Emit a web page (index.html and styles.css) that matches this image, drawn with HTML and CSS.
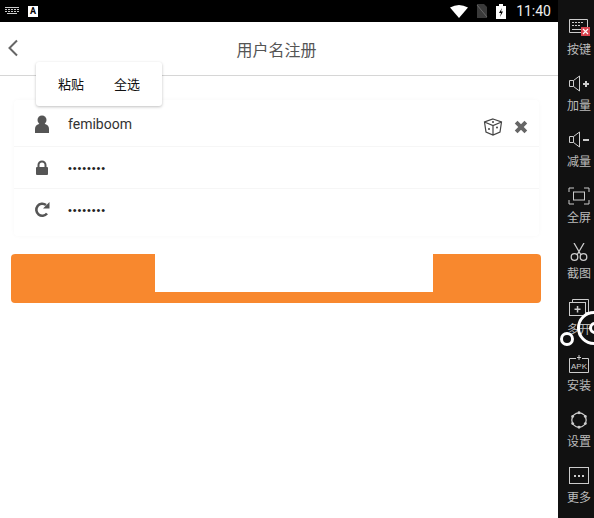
FILE: index.html
```html
<!DOCTYPE html>
<html lang="zh-CN">
<head>
  <meta charset="UTF-8" />
  <title>用户名注册</title>
  <link rel="stylesheet" href="styles.css">
</head>
<body>

  <div class="screen">
    <div class="statusbar">
      <div class="status-left">
        <svg class="kbd-icon" width="16" height="8" viewBox="0 0 16 8"><path d="M1 0h14v1H1zM1 2h2v1H1zM4 2h2v1H4zM7 2h2v1H7zM10 2h2v1h-2zM13 2h2v1h-2zM1 4h2v1H1zM4 4h2v1H4zM7 4h2v1H7zM10 4h2v1h-2zM13 4h2v1h-2zM3 6h10v1H3z" fill="#ccc"/></svg>
        <div class="a-icon">A</div>
      </div>
      <div class="status-right">
        <svg width="18" height="13" viewBox="0 0 18 13"><path d="M0 2.500Q9-2.500 18 2.500L9 13z" fill="#fff"/></svg>
        <svg width="14" height="14" viewBox="0 0 14 14"><path d="M2 0h7l3 3v11H2z" fill="#3a3a3a"/><path d="M2 1l10 12" stroke="#666" stroke-width="1"/></svg>
        <svg width="10" height="15" viewBox="0 0 10 15"><path d="M3 0h4v2h3v13H0V2h3z" fill="#fff"/><path d="M6 4L3 9h2l-1 4 3-5.500H5z" fill="#000"/></svg>
        <span class="clock">11:40</span>
      </div>
    </div>

    <div class="header">
      <svg class="back" width="12" height="18" viewBox="0 0 12 18"><path d="M10 1.500L2.500 9l7.500 7.500" fill="none" stroke="#666" stroke-width="2"/></svg>
      <h1>用户名注册</h1>
    </div>

    <div class="content">
      <div class="form">
        <div class="row row-first">
          <svg class="row-icon" width="16" height="18" viewBox="0 0 16 18"><circle cx="8" cy="5" r="4.500" fill="#555"/><path d="M1 18v-4q0-4 4-5h6q4 1 4 5v4z" fill="#555"/></svg>
          <span class="value">femiboom</span>
          <div class="row-actions">
            <svg width="20" height="18" viewBox="0 0 20 18"><path d="M10 1l8.500 3-1.500 10-7 3-7-3L1.500 4zM1.500 4L10 7.500 18.500 4M10 7.500V17" fill="none" stroke="#444" stroke-width="1.200"/><circle cx="6" cy="11" r="1" fill="#444"/><circle cx="14" cy="9.500" r="1" fill="#444"/><circle cx="10" cy="4" r="1" fill="#444"/></svg>
            <svg width="14" height="14" viewBox="0 0 13 13"><path d="M2 2l9 9M11 2l-9 9" stroke="#666" stroke-width="3.600"/></svg>
          </div>
        </div>
        <div class="row">
          <svg class="row-icon" width="14" height="16" viewBox="0 0 14 16"><path d="M3.500 7V5a3.500 3.500 0 017 0v2" fill="none" stroke="#555" stroke-width="2"/><rect x="1" y="7" width="12" height="8" rx="1" fill="#555"/></svg>
          <span class="dots">••••••••</span>
        </div>
        <div class="row row-last">
          <svg class="row-icon" width="17" height="17" viewBox="0 0 17 17"><path d="M13.500 12.500A6 6 0 1112.500 4" fill="none" stroke="#555" stroke-width="2.600"/><path d="M16 1v6.500H9.500z" fill="#555"/></svg>
          <span class="dots">••••••••</span>
        </div>
      </div>
      <div class="submit"><div class="submit-cover"></div></div>
    </div>

    <div class="popup">
      <span>粘贴</span>
      <span>全选</span>
    </div>
  </div>

  <div class="sidebar">
    <div class="tool">
      <svg width="22" height="18" viewBox="0 0 22 18"><path d="M1.500.5h18v13h-18z" fill="none" stroke="#ccc"/><path d="M4 3h2v1H4zM7 3h2v1H7zM10 3h2v1h-2zM13 3h2v1h-2zM4 6h2v1H4zM7 6h2v1H7zM10 6h2v1h-2zM4 10h9v1H4z" fill="#ccc"/><rect x="13" y="8" width="9" height="9" fill="#d9434e"/><path d="M15 10l5 5M20 10l-5 5" stroke="#fff" stroke-width="1.200"/></svg>
      <span>按键</span>
    </div>
    <div class="tool">
      <svg width="22" height="18" viewBox="0 0 22 18"><path d="M1.500 5.500h4l6-4.500v15l-6-4.500h-4zM5.500 5.500v6" fill="none" stroke="#ccc"/><path d="M15 8h6v2h-6zM17 6h2v6h-2z" fill="#ccc"/></svg>
      <span>加量</span>
    </div>
    <div class="tool">
      <svg width="22" height="18" viewBox="0 0 22 18"><path d="M1.500 5.500h4l6-4.500v15l-6-4.500h-4zM5.500 5.500v6" fill="none" stroke="#ccc"/><path d="M15 8h6v2h-6z" fill="#ccc"/></svg>
      <span>减量</span>
    </div>
    <div class="tool">
      <svg width="22" height="18" viewBox="0 0 22 18"><path d="M1 5V1h5M16 1h5v4M21 13v4h-5M6 17H1v-4" fill="none" stroke="#ccc"/><rect x="5.500" y="5" width="11" height="8" fill="none" stroke="#ccc"/></svg>
      <span>全屏</span>
    </div>
    <div class="tool">
      <svg width="22" height="18" viewBox="0 0 22 18"><path d="M6 0l7 12M16 0L9 12" stroke="#ccc" stroke-width="1.300"/><circle cx="6.500" cy="14" r="3.300" fill="none" stroke="#ccc" stroke-width="1.300"/><circle cx="15.500" cy="14" r="3.300" fill="none" stroke="#ccc" stroke-width="1.300"/></svg>
      <span>截图</span>
    </div>
    <div class="tool">
      <svg width="22" height="18" viewBox="0 0 22 18"><path d="M4.500 3.500V.5h16v13h-3" fill="none" stroke="#ccc"/><rect x="1.500" y="3.500" width="16" height="13" fill="none" stroke="#ccc"/><path d="M6.500 9.500h6v1.500h-6zM8.800 7h1.500v6.500H8.800z" fill="#ccc"/></svg>
      <span>多开</span>
    </div>
    <div class="tool">
      <svg width="22" height="18" viewBox="0 0 22 18"><path d="M8 3.500H1.500v14h19v-14H14" fill="none" stroke="#ccc"/><path d="M9 2h4v1H9zM10.500 0h1v5h-1z" fill="#ccc"/><text x="11" y="14" class="apk">APK</text></svg>
      <span>安装</span>
    </div>
    <div class="tool">
      <svg width="22" height="18" viewBox="0 0 22 20"><circle cx="11" cy="10" r="8" fill="none" stroke="#ccc" stroke-width="1.400"/><circle cx="11" cy="2" r="1.600" fill="#ccc"/><circle cx="11" cy="18" r="1.600" fill="#ccc"/><circle cx="4" cy="6" r="1.600" fill="#ccc"/><circle cx="18" cy="6" r="1.600" fill="#ccc"/><circle cx="4" cy="14" r="1.600" fill="#ccc"/><circle cx="18" cy="14" r="1.600" fill="#ccc"/></svg>
      <span>设置</span>
    </div>
    <div class="tool">
      <svg width="22" height="18" viewBox="0 0 22 18"><rect x="1.500" y=".5" width="19" height="16" fill="none" stroke="#ccc"/><path d="M6 8h2v2H6zM10 8h2v2h-2zM14 8h2v2h-2z" fill="#ccc"/></svg>
      <span>更多</span>
    </div>
    <div class="ring ring-big"></div>
    <div class="ring ring-inner"></div>
    <div class="ring ring-small"></div>
  </div>

</body>
</html>
```

FILE: styles.css
```css
* {
  margin: 0;
  padding: 0;
  box-sizing: border-box;
  font-family: Roboto, "Noto Sans CJK SC", sans-serif;
}

html, body {
  height: 100%;
  background: #fff;
  overflow: hidden;
}

body {
  display: flex;
}

.screen {
  width: 558px;
  height: 518px;
  position: relative;
  display: flex;
  flex-direction: column;
}

.statusbar {
  height: 22px;
  background: #000;
  display: flex;
  justify-content: space-between;
  align-items: center;
  padding: 0 7px 0 4px;
}

.status-left {
  display: flex;
  align-items: center;
  gap: 8px;
}

.a-icon {
  width: 10px;
  height: 11px;
  background: #fff;
  color: #000;
  font-size: 9px;
  font-weight: bold;
  line-height: 11px;
  text-align: center;
}

.status-right {
  display: flex;
  align-items: center;
  gap: 7px;
}

.clock {
  color: #eee;
  font-size: 14px;
  margin-left: 3px;
}

.header {
  height: 54px;
  border-bottom: 1px solid #d6d6d6;
  display: flex;
  align-items: center;
  justify-content: center;
  position: relative;
}

.back {
  position: absolute;
  left: 7px;
  top: 17px;
}

.header h1 {
  font-size: 16px;
  font-weight: normal;
  color: #555;
  margin-right: 5px;
}

.content {
  padding: 24px 17px 0 11px;
}

.form {
  margin: 0 2px 0 3px;
  border-radius: 4px;
  box-shadow: 0 0 4px rgba(0, 0, 0, 0.03);
}

.row {
  height: 42px;
  display: flex;
  align-items: center;
  padding-left: 19px;
  border-bottom: 1px solid #f6f6f6;
}

.row-last {
  height: 47px;
  border-bottom: none;
  padding-bottom: 6px;
}

.row-first {
  height: 47px;
  padding-top: 2px;
}

.row-icon {
  width: 18px;
  flex-shrink: 0;
}

.value {
  font-size: 14px;
  color: #333;
  margin-left: 17px;
}

.dots {
  font-size: 11px;
  color: #222;
  margin-left: 17px;
  letter-spacing: 0.9px;
  font-family: "Liberation Sans", sans-serif;
}

.row-actions {
  margin-left: auto;
  display: flex;
  align-items: center;
  gap: 11px;
  padding: 6px 11px 0 0;
}

.submit {
  margin-top: 18px;
  height: 49px;
  background: #f8882e;
  border-radius: 4px;
  position: relative;
}

.submit-cover {
  position: absolute;
  left: 144px;
  top: 0;
  width: 278px;
  height: 38px;
  background: #fff;
}

.popup {
  position: absolute;
  left: 36px;
  top: 62px;
  width: 126px;
  height: 44px;
  background: #fff;
  border-radius: 3px;
  box-shadow: 0 1px 3px rgba(0, 0, 0, 0.25);
  display: flex;
  justify-content: center;
  align-items: center;
  gap: 30px;
  padding-bottom: 2px;
  font-size: 13px;
  color: #111;
}

.sidebar {
  width: 36px;
  height: 518px;
  background: #111;
  display: flex;
  flex-direction: column;
  align-items: center;
  padding: 19px 0 0 6px;
  position: relative;
  overflow: hidden;
}

.tool {
  height: 56px;
  display: flex;
  flex-direction: column;
  align-items: center;
  gap: 5px;
  color: #bbb;
  font-size: 12px;
  line-height: 17px;
  flex-shrink: 0;
}

.apk {
  fill: #ccc;
  font-size: 8px;
  text-anchor: middle;
  font-family: "Liberation Sans", sans-serif;
}

.ring {
  position: absolute;
  border: 3px solid #fff;
  border-radius: 50%;
}

.ring-big {
  left: 19px;
  top: 311px;
  width: 34px;
  height: 34px;
}

.ring-inner {
  left: 31px;
  top: 322px;
  width: 12px;
  height: 12px;
}

.ring-small {
  left: 2px;
  top: 332px;
  width: 14px;
  height: 14px;
  background: #111;
}
```
